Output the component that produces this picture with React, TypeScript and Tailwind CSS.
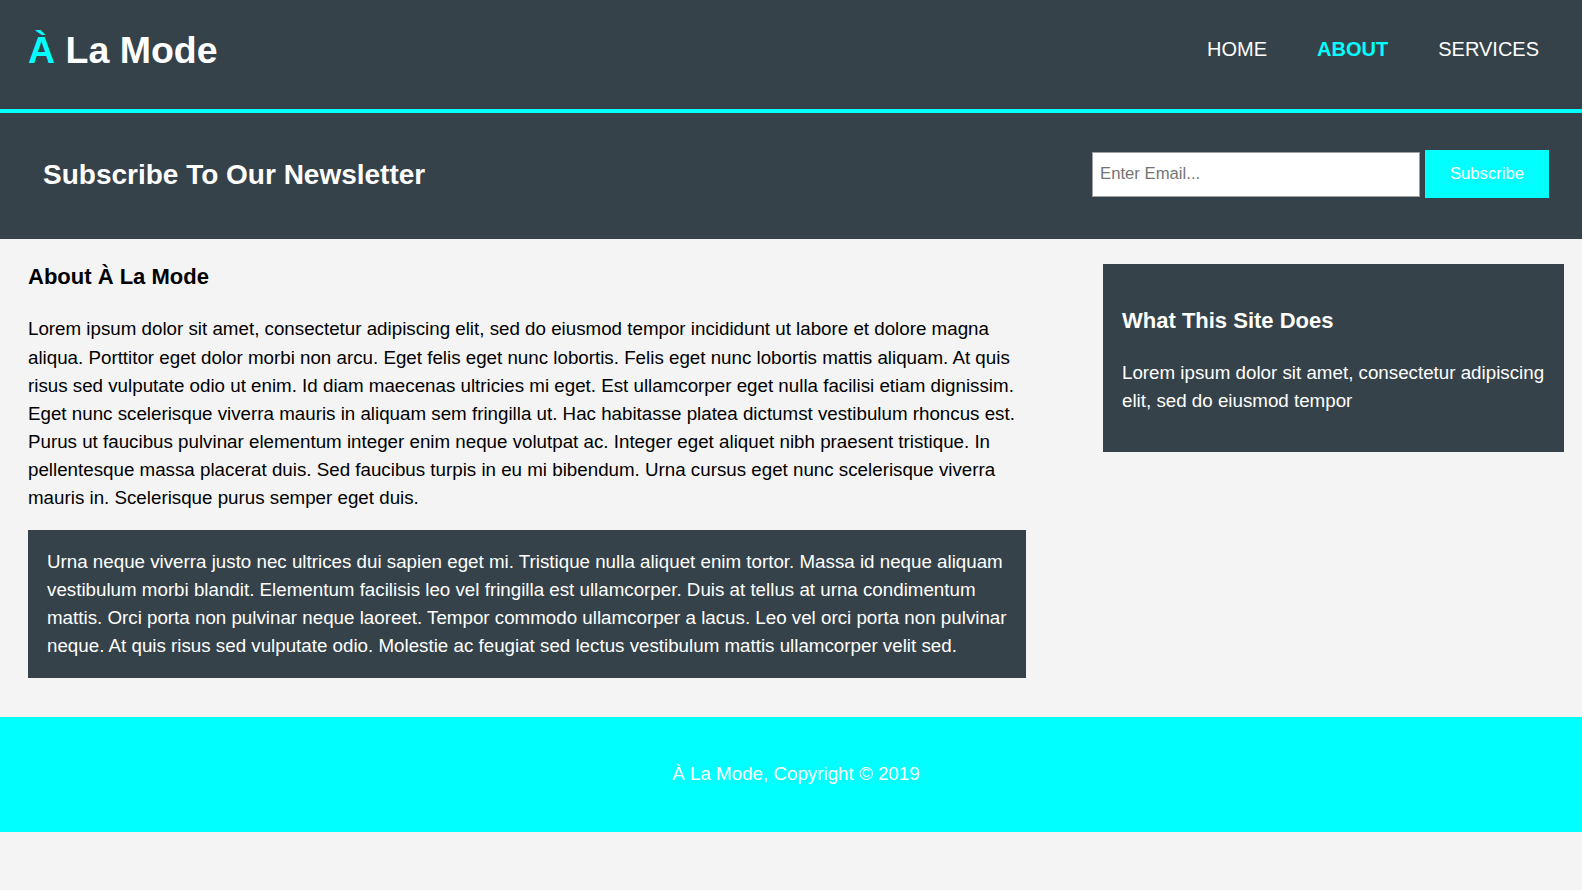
import { useState } from 'react'

// Nav links shown in the header (the active one is highlighted)
const NAV_LINKS = ['Home', 'About', 'Services']

const MAIN_TEXT =
    'Lorem ipsum dolor sit amet, consectetur adipiscing elit, sed do eiusmod tempor incididunt ut labore et dolore magna aliqua. Porttitor eget dolor morbi non arcu. Eget felis eget nunc lobortis. Felis eget nunc lobortis mattis aliquam. At quis risus sed vulputate odio ut enim. Id diam maecenas ultricies mi eget. Est ullamcorper eget nulla facilisi etiam dignissim. Eget nunc scelerisque viverra mauris in aliquam sem fringilla ut. Hac habitasse platea dictumst vestibulum rhoncus est. Purus ut faucibus pulvinar elementum integer enim neque volutpat ac. Integer eget aliquet nibh praesent tristique. In pellentesque massa placerat duis. Sed faucibus turpis in eu mi bibendum. Urna cursus eget nunc scelerisque viverra mauris in. Scelerisque purus semper eget duis.'

const DARK_TEXT =
    'Urna neque viverra justo nec ultrices dui sapien eget mi. Tristique nulla aliquet enim tortor. Massa id neque aliquam vestibulum morbi blandit. Elementum facilisis leo vel fringilla est ullamcorper. Duis at tellus at urna condimentum mattis. Orci porta non pulvinar neque laoreet. Tempor commodo ullamcorper a lacus. Leo vel orci porta non pulvinar neque. At quis risus sed vulputate odio. Molestie ac feugiat sed lectus vestibulum mattis ullamcorper velit sed.'

/**
 * Header with logo and navigation
 */
function Header({ active }: { active: string }) {
    return (
        <header className="bg-[#35424a] border-b-4 border-[#00ffff] pl-[28px] pr-[18px] pt-[28px] pb-[37px]">
            <div className="flex justify-between items-center h-[44px]">
                <h1 className="text-[37.5px] leading-[44px] font-bold text-white">
                    <span className="text-[#00ffff]">À</span> La Mode
                </h1>
                <nav>
                    <ul className="flex">
                        {NAV_LINKS.map((link) => (
                            <li key={link} className="px-[25px]">
                                <a
                                    href="#"
                                    className={
                                        link === active
                                            ? 'uppercase text-[20px] leading-[24px] font-bold text-[#00ffff]'
                                            : 'uppercase text-[20px] leading-[24px] text-white'
                                    }
                                >
                                    {link}
                                </a>
                            </li>
                        ))}
                    </ul>
                </nav>
            </div>
        </header>
    )
}

/**
 * Newsletter strip (heading + email form)
 */
function Newsletter() {
    const [email, setEmail] = useState('')

    return (
        <section className="bg-[#35424a] text-white pl-[43px] pr-[33px] pt-[37px] pb-[41px]">
            <div className="flex justify-between items-center h-[48px]">
                <h1 className="pt-[2px] text-[28px] leading-[34px] font-bold">Subscribe To Our Newsletter</h1>
                <form className="flex items-center gap-[5px]" onSubmit={(e) => e.preventDefault()}>
                    <input
                        type="email"
                        value={email}
                        onChange={(e) => setEmail(e.target.value)}
                        placeholder="Enter Email..."
                        className="w-[328px] h-[45px] pl-[7px] pr-[5px] bg-white border border-[#a0a0a0] text-[16.7px] text-black placeholder:text-[#757575] outline-none"
                    />
                    <button className="w-[124px] h-[48px] bg-[#00ffff] text-white text-[16.7px]">Subscribe</button>
                </form>
            </div>
        </section>
    )
}

export default function App() {
    return (
        <div className="min-h-[890px] bg-[#f4f4f4] font-['Liberation_Sans',Arial,sans-serif] text-[18.75px] leading-[28.125px] text-black">
            <Header active="About" />
            <Newsletter />

            {/* Main column + sidebar */}
            <div className="flex justify-between items-start pl-[28px] pr-[18px] pb-[38.5px]">
                <main className="w-[998px] pt-[25px]">
                    <h1 className="text-[22px] leading-[26px] font-bold">About À La Mode</h1>
                    <p className="mt-[25.4px]">{MAIN_TEXT}</p>
                    <div className="mt-[17.7px] bg-[#35424a] text-white pl-[19px] pr-[17px] py-[18px]">
                        <p>{DARK_TEXT}</p>
                    </div>
                </main>

                <aside className="w-[461px] mt-[25px] bg-[#35424a] text-white pl-[19px] pr-[17px] pt-[18px] pb-[18px]">
                    <h3 className="mt-[26px] text-[22px] leading-[26px] font-bold">What This Site Does</h3>
                    <p className="mt-[25px] mb-[19px]">
                        Lorem ipsum dolor sit amet, consectetur adipiscing elit, sed do eiusmod tempor
                    </p>
                </aside>
            </div>

            {/* Footer (text centred on the content container) */}
            <footer className="bg-[#00ffff] text-white text-center h-[115px] pl-[10px] flex items-center justify-center">
                <p>À La Mode, Copyright © 2019</p>
            </footer>
        </div>
    )
}
